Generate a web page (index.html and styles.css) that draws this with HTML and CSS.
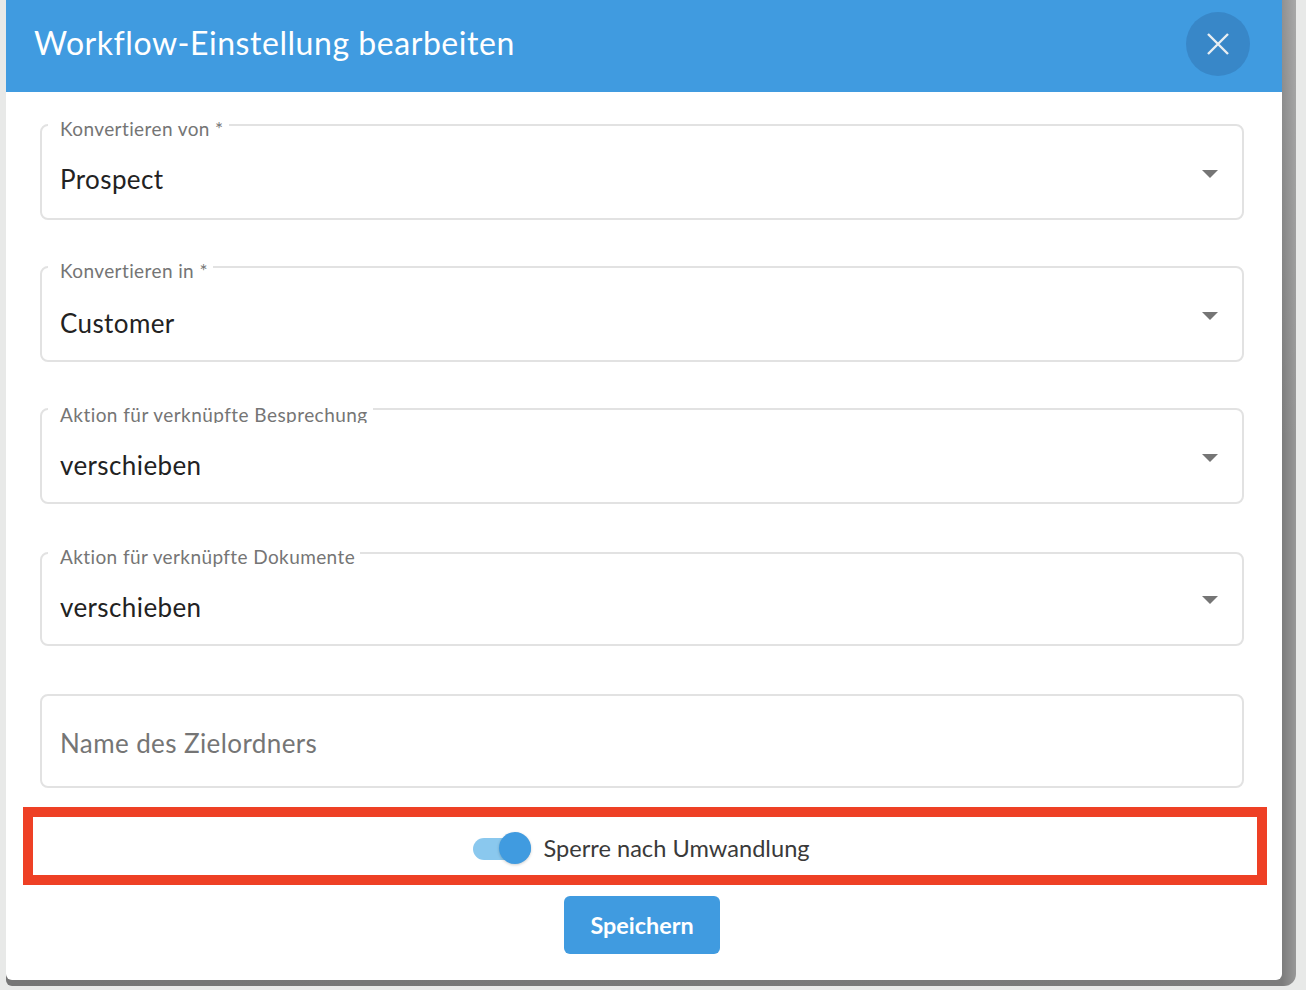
FILE: index.html
```html
<!DOCTYPE html>
<html lang="de">
<head>
<meta charset="utf-8">
<title>Workflow-Einstellung bearbeiten</title>
<link rel="stylesheet" href="styles.css">
</head>
<body>
<div class="backdrop">
  <div class="dialog">
    <header class="dialog-header">
      <h1 class="dialog-title">Workflow-Einstellung bearbeiten</h1>
      <button class="close-button" type="button" aria-label="Schließen">
        <svg class="close-icon" viewBox="0 0 22 22"><path d="M1 1 21 21M21 1 1 21"/></svg>
      </button>
    </header>
    <form class="dialog-body">
      <div class="field field-a">
        <span class="field-label">Konvertieren von *</span>
        <span class="field-value">Prospect</span>
        <span class="caret"></span>
      </div>
      <div class="field field-b">
        <span class="field-label">Konvertieren in *</span>
        <span class="field-value">Customer</span>
        <span class="caret"></span>
      </div>
      <div class="field field-c">
        <span class="field-label">Aktion für verknüpfte Besprechung</span>
        <span class="field-value">verschieben</span>
        <span class="caret"></span>
      </div>
      <div class="field field-d">
        <span class="field-label">Aktion für verknüpfte Dokumente</span>
        <span class="field-value">verschieben</span>
        <span class="caret"></span>
      </div>
      <div class="field field-e">
        <span class="field-placeholder">Name des Zielordners</span>
      </div>
      <div class="toggle-row">
        <span class="toggle"><span class="toggle-knob"></span></span>
        <span class="toggle-label">Sperre nach Umwandlung</span>
      </div>
      <div class="actions">
        <button class="save-button" type="button">Speichern</button>
      </div>
    </form>
  </div>
</div>
</body>
</html>
```
FILE: styles.css
```css
* { box-sizing: border-box; }
html, body { margin: 0; height: 100%; overflow: hidden; }
body {
  background: #e8e9e8;
  font-family: "Lato", "Noto Sans", sans-serif;
  color: #222;
}
.backdrop {
  width: 1290px;
  height: 986px;
  margin-left: 6px;
  padding: 0 14px 6px 0;
  background:
    linear-gradient(180deg, rgba(255, 255, 255, .16), rgba(255, 255, 255, 0) 45%),
    linear-gradient(90deg, #757575 0, #7c7c7c 1276px, #989898 100%);
  border-bottom-right-radius: 12px;
  border-bottom-left-radius: 6px;
}
.dialog {
  width: 1276px;
  height: 980px;
  background: #fff;
  border-bottom-left-radius: 6px;
  border-bottom-right-radius: 6px;
  overflow: hidden;
}
.dialog-header {
  height: 92px;
  background: #409be0;
  display: flex;
  align-items: center;
  justify-content: space-between;
  padding: 0 32px 0 28px;
}
.dialog-title {
  margin: 0 0 6px;
  color: #fff;
  font-size: 32px;
  font-weight: 400;
  line-height: 40px;
  letter-spacing: .55px;
}
.close-button {
  width: 64px;
  height: 64px;
  border: 0;
  padding: 0;
  margin-bottom: 4px;
  border-radius: 50%;
  background: #3887c8;
  display: flex;
  align-items: center;
  justify-content: center;
}
.close-icon {
  width: 22px;
  height: 22px;
  fill: none;
  stroke: #e8eef3;
  stroke-width: 2.4;
}
.dialog-body {
  padding-top: 32px;
  display: flex;
  flex-direction: column;
}
.field {
  position: relative;
  margin: 0 38px 46px 34px;
  height: 96px;
  border: 2px solid #e2e2e2;
  border-radius: 8px;
  display: flex;
  justify-content: space-between;
  padding: 0 24px 0 18px;
}
.field-c { margin-bottom: 48px; }
.field-d { height: 94px; margin-bottom: 48px; }
.field-e { height: 94px; margin-bottom: 19px; }
.field-label {
  position: absolute;
  top: -8px;
  left: 6px;
  height: 22px;
  padding: 0 5px 0 12px;
  background: #fff;
  font-size: 19px;
  line-height: 22px;
  letter-spacing: .4px;
  color: #757575;
  overflow: hidden;
  white-space: nowrap;
}
.field-c .field-label {
  top: -6px;
  height: 19px;
  letter-spacing: .45px;
}
.field-value {
  font-size: 26px;
  line-height: 32px;
  letter-spacing: .4px;
  color: #222;
  margin-top: 37px;
}
.field-b .field-value, .field-c .field-value { margin-top: 39px; }
.field-placeholder {
  font-size: 26px;
  line-height: 32px;
  letter-spacing: .4px;
  color: #757575;
  margin-top: 31px;
}
.caret {
  width: 0;
  height: 0;
  margin-top: 44px;
  border-left: 8px solid transparent;
  border-right: 8px solid transparent;
  border-top: 8px solid #757575;
}
.field-d .caret { margin-top: 42px; }
.toggle-row {
  margin: 0 15px 0 17px;
  height: 78px;
  border: 10px solid #ee4025;
  display: flex;
  align-items: center;
  justify-content: center;
  gap: 12px;
  padding: 6px 7px 0 0;
}
.toggle {
  position: relative;
  width: 58px;
  height: 22px;
  border-radius: 11px;
  background: linear-gradient(90deg, #8ac8ee 60%, #7fbfe9 100%);
  display: block;
}
.toggle-knob {
  position: absolute;
  top: -6px;
  right: 0;
  width: 32px;
  height: 32px;
  border-radius: 50%;
  background: #409be0;
  box-shadow: 0 1px 3px rgba(0, 0, 0, .2);
}
.toggle-label {
  font-size: 23.6px;
  line-height: 32px;
  letter-spacing: .02px;
  margin-bottom: 2px;
  color: #3a3a3a;
}
.actions {
  display: flex;
  justify-content: center;
  padding: 11px 4px 0 0;
}
.save-button {
  width: 156px;
  height: 58px;
  border: 0;
  border-radius: 6px;
  background: #409be0;
  color: #fff;
  font-family: inherit;
  font-size: 23.4px;
  font-weight: 700;
}
```
